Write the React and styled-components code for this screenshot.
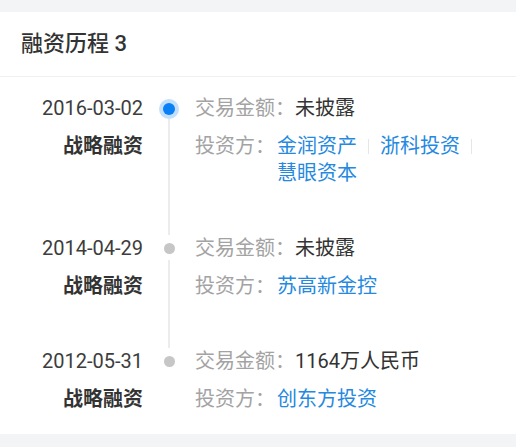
import styled, { createGlobalStyle } from 'styled-components';

const GlobalStyle = createGlobalStyle`
  html, body {
    margin: 0;
    padding: 0;
    background: #f3f4f6;
  }
  body {
    font-family: Roboto, "Noto Sans CJK SC", sans-serif;
    color: #333;
  }
`;

const Page = styled.div`
  padding: 12px 0 14px;
`;

const Card = styled.section`
  background: #fff;
`;

const Header = styled.h2`
  margin: 0;
  height: 64px;
  line-height: 64px;
  padding-left: 21px;
  font-size: 22px;
  font-weight: 500;
  color: #333;
  border-bottom: 1px solid #f0f0f0;
`;

const List = styled.div`
  padding: 18px 0 21px;
`;

const Item = styled.div`
  display: grid;
  grid-template-columns: 143px 52px 1fr;
  grid-template-rows: auto auto;
  row-gap: 11px;
  padding-bottom: ${(p) => (p.$last ? '0' : '48px')};
  font-size: 20px;
  line-height: 27px;
`;

const DateText = styled.div`
  grid-column: 1;
  grid-row: 1;
  text-align: right;
  color: #3d3d3d;
`;

const RoundText = styled.div`
  grid-column: 1;
  grid-row: 2;
  text-align: right;
  font-weight: 700;
  color: #333;
`;

const Rail = styled.div`
  grid-column: 2;
  grid-row: 1 / span 2;
  display: flex;
  flex-direction: column;
  align-items: center;
  margin-bottom: ${(p) => (p.$last ? '0' : '-48px')};
`;

const DotBox = styled.div`
  height: 27px;
  display: flex;
  align-items: center;
  justify-content: center;
`;

const Dot = styled.span`
  display: block;
  width: ${(p) => (p.$active ? '12px' : '11px')};
  height: ${(p) => (p.$active ? '12px' : '11px')};
  border-radius: 50%;
  background: ${(p) => (p.$active ? '#0a80f5' : '#c6c6c6')};
  box-shadow: ${(p) => (p.$active ? '0 0 0 4px rgba(10, 128, 245, 0.25)' : 'none')};
`;

const Line = styled.div`
  flex: 1;
  width: 2px;
  margin-top: ${(p) => (p.$active ? '-3px' : '-2px')};
  background: #ececec;
`;

const Field = styled.div`
  grid-column: 3;
  grid-row: ${(p) => p.$row};
  display: flex;
  align-items: flex-start;
  padding-right: 20px;
`;

const Label = styled.span`
  flex: none;
  color: #a3a3a3;
`;

const Value = styled.span`
  color: #333;
`;

const Links = styled.div`
  display: flex;
  flex-wrap: wrap;
  margin-left: 2px;
`;

const Link = styled.a`
  display: inline-flex;
  align-items: center;
  color: #2589e0;
  text-decoration: none;

  &:not(:last-child)::after {
    content: '';
    display: inline-block;
    width: 1px;
    height: 15px;
    margin: 0 11px 0 11px;
    background: #e6e6e6;
  }
`;

const rounds = [
  { date: '2016-03-02', round: '战略融资', amount: '未披露', investors: ['金润资产', '浙科投资', '慧眼资本'] },
  { date: '2014-04-29', round: '战略融资', amount: '未披露', investors: ['苏高新金控'] },
  { date: '2012-05-31', round: '战略融资', amount: '1164万人民币', investors: ['创东方投资'] }
];

const App = () => {
  return (
    <Page>
      <GlobalStyle />
      <Card>
        <Header>融资历程 3</Header>
        <List>
          {rounds.map((r, i) => {
            const last = i === rounds.length - 1;
            const active = i === 0;
            return (
              <Item key={r.date} $last={last}>
                <DateText>{r.date}</DateText>
                <RoundText>{r.round}</RoundText>
                <Rail $last={last}>
                  <DotBox>
                    <Dot $active={active} />
                  </DotBox>
                  {!last && <Line $active={active} />}
                </Rail>
                <Field $row={1}>
                  <Label>交易金额：</Label>
                  <Value>{r.amount}</Value>
                </Field>
                <Field $row={2}>
                  <Label>投资方：</Label>
                  <Links>
                    {r.investors.map((name) => (
                      <Link key={name} href="#">{name}</Link>
                    ))}
                  </Links>
                </Field>
              </Item>
            );
          })}
        </List>
      </Card>
    </Page>
  );
};

export default App;
